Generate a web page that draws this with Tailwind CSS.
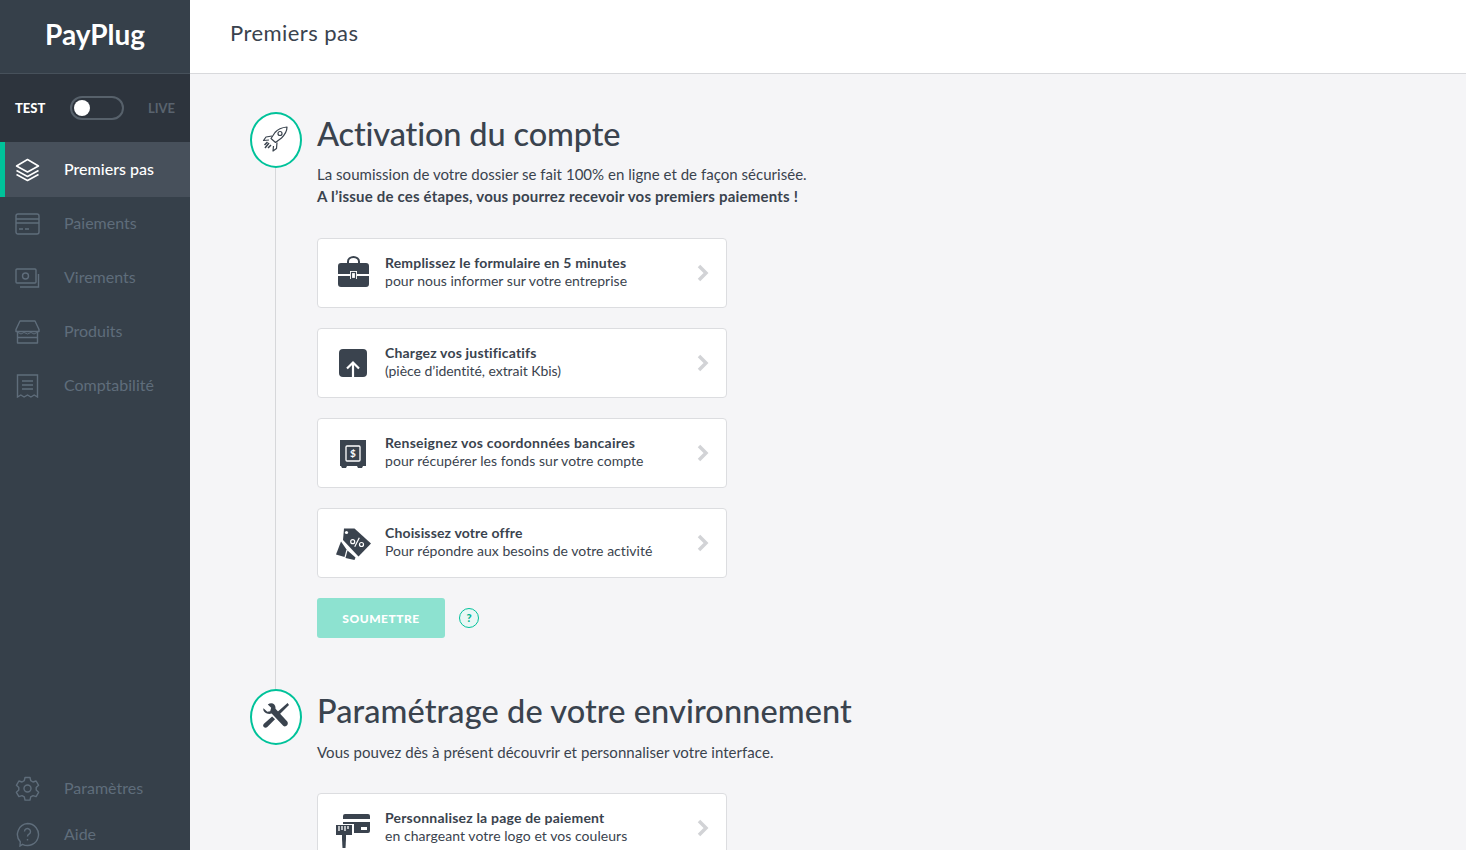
<!DOCTYPE html>
<html lang="fr">
<head>
    <meta charset="UTF-8">
    <meta name="viewport" content="width=device-width, initial-scale=1.0">
    <title>PayPlug - Premiers pas</title>
    <script src="https://cdn.jsdelivr.net/npm/@tailwindcss/browser@4"></script>
</head>
<body class="h-screen overflow-hidden flex bg-[#f5f5f7] font-['Lato','Open_Sans',sans-serif] text-[#3a434e] [font-variant-ligatures:none]">
    <!-- sidebar -->
    <aside class="w-[190px] h-[850px] shrink-0 bg-[#36404a] flex flex-col overflow-hidden">
        <div class="h-[74px] shrink-0 flex items-center justify-center border-b border-[#47515b]">
            <span class="text-[28px] font-bold text-white leading-none pb-[6px]">PayPlug</span>
        </div>
        <div class="h-[68px] shrink-0 bg-[#2d343d] flex items-center pl-[15px] pr-[15px]">
            <span class="w-[30px] pt-[1px] text-[13px] font-black text-white">TEST</span>
            <div class="ml-[25px] w-[54px] h-[24px] rounded-full border-2 border-[#57616b] flex items-center pl-[2px]">
                <div class="w-[16px] h-[16px] rounded-full bg-white"></div>
            </div>
            <span class="ml-auto pt-[1px] text-[13px] font-bold text-[#59636e]">LIVE</span>
        </div>
        <nav class="flex flex-col text-[16px] text-[#5f6d7b]">
            <a class="h-[55px] flex items-center bg-[#47505b] border-l-[5px] border-[#00c29a] pl-[10px] text-white font-medium">
                <svg class="w-[25px] h-[24px]" viewBox="0 0 25 24" fill="none" stroke="#fff" stroke-width="1.5" stroke-linejoin="round"><path d="M12.5 1.5 23.5 8 12.5 14 1.5 8z"/><path d="M1.5 12.5 12.5 18.5 23.5 12.5"/><path d="M1.5 16.5 12.5 22.5 23.5 16.5"/></svg>
                <span class="ml-[24px] pb-[2px]">Premiers pas</span>
            </a>
            <a class="h-[54px] flex items-center pl-[15px]">
                <svg class="w-[25px] h-[24px]" viewBox="0 0 25 24" fill="none" stroke="#5f6d7b" stroke-width="1.4"><rect x="1" y="2" width="23" height="20" rx="2"/><path d="M1 7h23M1 11h23M4 17h4M10 17h4"/></svg>
                <span class="ml-[24px] pb-[2px]">Paiements</span>
            </a>
            <a class="h-[54px] flex items-center pl-[15px]">
                <svg class="w-[25px] h-[24px]" viewBox="0 0 25 24" fill="none" stroke="#5f6d7b" stroke-width="1.4"><rect x="1" y="3" width="20" height="14" rx="1"/><circle cx="10.5" cy="10" r="3"/><path d="M5 21h18.5V8"/></svg>
                <span class="ml-[24px] pb-[2px]">Virements</span>
            </a>
            <a class="h-[54px] flex items-center pl-[15px]">
                <svg class="w-[25px] h-[24px]" viewBox="0 0 25 24" fill="none" stroke="#5f6d7b" stroke-width="1.4" stroke-linejoin="round"><path d="M5 1h15l4 8.5v2H1v-2z"/><path d="M2.500 11.500V23h20V11.500M2.500 17.500h20"/><path d="M3 12.500l3 1.500 3-1.500 3.500 1.500 3.500-1.500 3 1.500 3-1.500" stroke-width="1"/></svg>
                <span class="ml-[24px] pb-[2px]">Produits</span>
            </a>
            <a class="h-[54px] flex items-center pl-[15px]">
                <svg class="w-[25px] h-[24px]" viewBox="0 0 25 24" fill="none" stroke="#5f6d7b" stroke-width="1.4"><path d="M2.500 1h20v22l-3.300-2-3.300 2-3.400-2-3.400 2-3.300-2-3.300 2z"/><path d="M7 7h11M7 11h11M7 15h11"/></svg>
                <span class="ml-[24px] pb-[2px]">Comptabilité</span>
            </a>
        </nav>
        <div class="mt-auto flex flex-col text-[16px] text-[#5f6d7b]">
            <a class="h-[46px] flex items-center pl-[15px]">
                <svg class="w-[25px] h-[25px]" viewBox="0 0 25 25" fill="none" stroke="#5f6d7b" stroke-width="1.4" stroke-linejoin="round"><path d="M10 1.500h5l.7 3.200 2.300 1.300 3.100-1 2.500 4.300-2.400 2.200v2.600l2.400 2.200-2.500 4.300-3.100-1-2.300 1.300-.7 3.200h-5l-.7-3.200-2.300-1.300-3.100 1-2.500-4.300 2.400-2.200v-2.600L1.400 9.300l2.500-4.300 3.100 1 2.300-1.300z"/><circle cx="12.500" cy="12.500" r="3.500"/></svg>
                <span class="ml-[24px]">Paramètres</span>
            </a>
            <a class="h-[46px] flex items-center pl-[15px] mb-[-7px]">
                <svg class="w-[25px] h-[25px]" viewBox="0 0 25 25" fill="none" stroke="#5f6d7b" stroke-width="1.4"><path d="M12.500 1.500a11 11 0 1 1-5 20.800L5 24l.3-4.200a11 11 0 0 1 7.200-18.300z"/><path d="M9.500 9.500a3 3 0 1 1 4.500 2.700c-1 .6-1.500 1.200-1.500 2.300M12.500 17v1.500"/></svg>
                <span class="ml-[24px]">Aide</span>
            </a>
        </div>
    </aside>

    <div class="flex-1 min-w-0 flex flex-col">
        <header class="h-[74px] shrink-0 bg-white border-b border-[#d8d9dc] flex items-center pl-[40px] pb-[8px]">
            <h2 class="text-[22px] font-normal tracking-[0.45px]">Premiers pas</h2>
        </header>

        <main class="pl-[60px] pt-[38px]">
            <!-- activation -->
            <section class="flex h-[577px]">
                <div class="w-[52px] flex flex-col">
                    <div class="w-[52px] h-[56px] shrink-0 rounded-[50%] bg-white border-2 border-[#00c29a] flex items-center justify-center pr-[3px] pb-[2px]">
                        <svg class="w-[26px] h-[26px]" viewBox="0 0 26 26" fill="none" stroke="#3a434e" stroke-width="1.2" stroke-linejoin="round"><path d="M25 1c-5 .5-9 2-12 5.500L9 12.500l4.500 4 6-4.500C23 8.500 25 5 25 1z"/><circle cx="18" cy="7.500" r="2"/><path d="M10 10 4 11 1.500 14.500 7 14M15 16.500l-.5 6-3.500 2.500.5-5"/><path d="M7 17l-4 5M9 19l-3 3M5.500 16l-3 3" stroke-width="1.500"/></svg>
                    </div>
                    <div class="w-px flex-1 ml-[25px] bg-[#d6d7da]"></div>
                </div>
                <div class="ml-[15px] w-[620px]">
                    <h1 class="text-[32.5px] leading-[46px] mt-[-1px] font-medium tracking-[-0.15px]">Activation du compte</h1>
                    <p class="mt-[6px] text-[15px] leading-[22px] tracking-[0.03px]">La soumission de votre dossier se fait 100% en ligne et de façon sécurisée.</p>
                    <p class="text-[15px] leading-[22px] font-bold tracking-[0.2px]">A l’issue de ces étapes, vous pourrez recevoir vos premiers paiements !</p>

                    <div class="mt-[31px] flex flex-col gap-[20px] w-[410px]">
                        <a class="h-[70px] bg-white border border-[#dcdde0] rounded-[4px] flex items-center pl-[18px] pr-[17px]">
                            <svg class="w-[34px] h-[34px] shrink-0" viewBox="0 0 34 34"><path d="M12 7V5.500a5.500 4.500 0 0 1 11 0V7" fill="none" stroke="#3a434e" stroke-width="2"/><path d="M5 7h25a3 3 0 0 1 3 3v8H21v-3h-7v3H2v-8a3 3 0 0 1 3-3z" fill="#3a434e"/><path d="M2 20h12v3h7v-3h12v8a3 3 0 0 1-3 3H5a3 3 0 0 1-3-3z" fill="#3a434e"/><rect x="15.500" y="16.500" width="4" height="6" fill="none" stroke="#3a434e" stroke-width="1.200"/></svg>
                            <div class="ml-[15px] flex-1 text-[14px] leading-[18px] pb-[2px] tracking-[0.03px]">
                                <div class="font-bold tracking-[0.18px]">Remplissez le formulaire en 5 minutes</div>
                                <div>pour nous informer sur votre entreprise</div>
                            </div>
                            <svg class="w-[12px] h-[18px]" viewBox="0 0 12 18" fill="none" stroke="#d2d3d6" stroke-width="3.500"><path d="M2 2l7 7-7 7"/></svg>
                        </a>
                        <a class="h-[70px] bg-white border border-[#dcdde0] rounded-[4px] flex items-center pl-[18px] pr-[17px]">
                            <svg class="w-[34px] h-[34px] shrink-0" viewBox="0 0 34 34"><rect x="3" y="3" width="28" height="28" rx="4" fill="#3a434e"/><path d="M17 31V17M11 22.500l6-6 6 6" fill="none" stroke="#fff" stroke-width="2.200"/></svg>
                            <div class="ml-[15px] flex-1 text-[14px] leading-[18px] pb-[2px]">
                                <div class="font-bold tracking-[0.18px]">Chargez vos justificatifs</div>
                                <div class="tracking-[-0.05px]">(pièce d’identité, extrait Kbis)</div>
                            </div>
                            <svg class="w-[12px] h-[18px]" viewBox="0 0 12 18" fill="none" stroke="#d2d3d6" stroke-width="3.500"><path d="M2 2l7 7-7 7"/></svg>
                        </a>
                        <a class="h-[70px] bg-white border border-[#dcdde0] rounded-[4px] flex items-center pl-[18px] pr-[17px]">
                            <svg class="w-[34px] h-[34px] shrink-0" viewBox="0 0 34 34"><path d="M4 4h26v26h-3l-1 2h-4l-1-2H11l-1 2H6l-1-2H4z" fill="#3a434e"/><rect x="10" y="10" width="14" height="15" rx="1" fill="none" stroke="#fff" stroke-width="1.300"/><text x="17" y="21" text-anchor="middle" font-size="10" font-weight="700" fill="#fff" font-family="Lato, sans-serif">$</text></svg>
                            <div class="ml-[15px] flex-1 text-[14px] leading-[18px] pb-[2px]">
                                <div class="font-bold tracking-[0.25px]">Renseignez vos coordonnées bancaires</div>
                                <div class="tracking-[0.05px]">pour récupérer les fonds sur votre compte</div>
                            </div>
                            <svg class="w-[12px] h-[18px]" viewBox="0 0 12 18" fill="none" stroke="#d2d3d6" stroke-width="3.500"><path d="M2 2l7 7-7 7"/></svg>
                        </a>
                        <a class="h-[70px] bg-white border border-[#dcdde0] rounded-[4px] flex items-center pl-[18px] pr-[17px]">
                            <svg class="w-[36px] h-[34px] shrink-0" viewBox="0 0 36 34"><path d="M8 2.500h10.500L35 17.500 22.500 30.500 7 14z" fill="#3a434e"/><circle cx="10.500" cy="6.500" r="1.600" fill="#fff"/><path d="M5 15.500 0 28.500l8.500 2.500 2-7.500z" fill="#3a434e"/><path d="M11.500 24.500 9.500 32l9 2 1-2.500z" fill="#3a434e"/><path d="M18.700 20.700l4.600-9" stroke="#fff" stroke-width="1.200"/><circle cx="16.700" cy="15.700" r="2" fill="none" stroke="#fff" stroke-width="1.200"/><circle cx="25.500" cy="18.500" r="2" fill="none" stroke="#fff" stroke-width="1.200"/></svg>
                            <div class="ml-[13px] flex-1 text-[14px] leading-[18px] pb-[2px]">
                                <div class="font-bold tracking-[0.15px]">Choisissez votre offre</div>
                                <div class="tracking-[0.03px]">Pour répondre aux besoins de votre activité</div>
                            </div>
                            <svg class="w-[12px] h-[18px]" viewBox="0 0 12 18" fill="none" stroke="#d2d3d6" stroke-width="3.500"><path d="M2 2l7 7-7 7"/></svg>
                        </a>
                    </div>

                    <div class="mt-[20px] flex items-center">
                        <button class="w-[128px] h-[40px] pt-[2px] rounded-[3px] bg-[#8de2d0] text-white text-[12px] font-black tracking-[0.5px]">SOUMETTRE</button>
                        <span class="ml-[14px] w-[20px] h-[20px] rounded-full border border-[#00c29a] bg-[#e9f7f5] text-[#00b590] text-[11px] font-black flex items-center justify-center">?</span>
                    </div>
                </div>
            </section>

            <!-- environnement -->
            <section class="flex">
                <div class="w-[52px]">
                    <div class="w-[52px] h-[56px] rounded-[50%] bg-white border-2 border-[#00c29a] flex items-center justify-center pb-[3px] pr-[1px]">
                        <svg class="w-[27px] h-[27px]" viewBox="0 0 28 28" fill="#3a434e"><path d="M1.500 6.500 5.500 10l3-.5L9.500 6 6 2.500C10-.5 14.500 2 14 7l12 13c2.500 3-1.500 7-4 4.500L10 12C5 13.500.5 10 1.500 6.500z"/><path d="M26.500 1 28 3 15.500 15.500 13 13zM10.500 15l3 3L5.500 26C3 28-.5 25 2 22.500z"/></svg>
                    </div>
                </div>
                <div class="ml-[15px] w-[620px]">
                    <h1 class="text-[32.5px] leading-[46px] mt-[-1px] font-medium tracking-[0.09px]">Paramétrage de votre environnement</h1>
                    <p class="mt-[7px] text-[15px] leading-[22px] tracking-[0.05px]">Vous pouvez dès à présent découvrir et personnaliser votre interface.</p>
                    <a class="mt-[30px] w-[410px] h-[70px] bg-white border border-[#dcdde0] rounded-[4px] flex items-center pl-[18px] pr-[17px]">
                        <svg class="w-[34px] h-[34px] shrink-0 overflow-visible" viewBox="0 0 34 34"><path d="M7 5a2 2 0 0 1 2-2h23a2 2 0 0 1 2 2v3H7zM7 11h27v9a2 2 0 0 1-2 2H18V13H7z" fill="#3a434e"/><rect x="25" y="16" width="6" height="3" fill="#fff"/><path d="M0 14h16v10H0z" fill="#3a434e"/><path d="M3 15v5M6 15v4M9 15v5M12 15v3" stroke="#fff" stroke-width="1.300"/><path d="M6 24h4v4l-.5 9h-3L6 28z" fill="#3a434e"/></svg>
                        <div class="ml-[15px] flex-1 text-[14px] leading-[18px] pb-[2px]">
                            <div class="font-bold tracking-[0.2px]">Personnalisez la page de paiement</div>
                            <div class="tracking-[0.05px]">en chargeant votre logo et vos couleurs</div>
                        </div>
                        <svg class="w-[12px] h-[18px]" viewBox="0 0 12 18" fill="none" stroke="#d2d3d6" stroke-width="3.500"><path d="M2 2l7 7-7 7"/></svg>
                    </a>
                </div>
            </section>
        </main>
    </div>
</body>
</html>
